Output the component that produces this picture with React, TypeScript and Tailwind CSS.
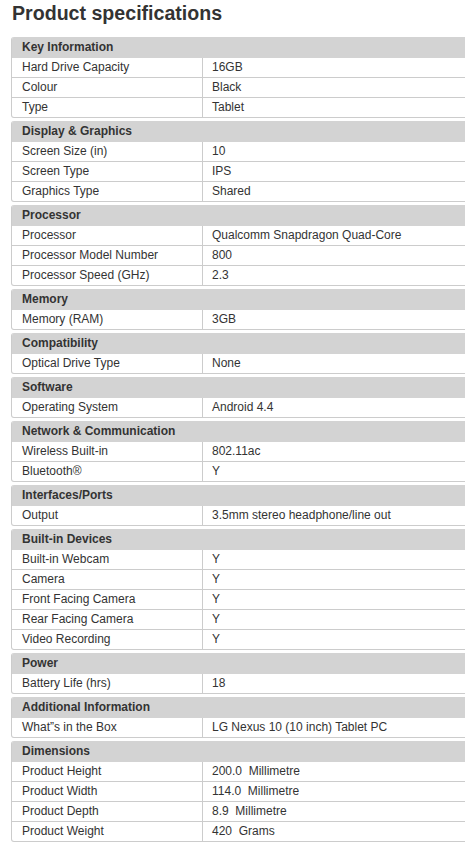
import React from "react";

type Section = { title: string; rows: [string, string][] };

const sections: Section[] = [
  {
    title: "Key Information",
    rows: [
      ["Hard Drive Capacity", "16GB"],
      ["Colour", "Black"],
      ["Type", "Tablet"],
    ],
  },
  {
    title: "Display & Graphics",
    rows: [
      ["Screen Size (in)", "10"],
      ["Screen Type", "IPS"],
      ["Graphics Type", "Shared"],
    ],
  },
  {
    title: "Processor",
    rows: [
      ["Processor", "Qualcomm Snapdragon Quad-Core"],
      ["Processor Model Number", "800"],
      ["Processor Speed (GHz)", "2.3"],
    ],
  },
  { title: "Memory", rows: [["Memory (RAM)", "3GB"]] },
  { title: "Compatibility", rows: [["Optical Drive Type", "None"]] },
  { title: "Software", rows: [["Operating System", "Android 4.4"]] },
  {
    title: "Network & Communication",
    rows: [
      ["Wireless Built-in", "802.11ac"],
      ["Bluetooth®", "Y"],
    ],
  },
  { title: "Interfaces/Ports", rows: [["Output", "3.5mm stereo headphone/line out"]] },
  {
    title: "Built-in Devices",
    rows: [
      ["Built-in Webcam", "Y"],
      ["Camera", "Y"],
      ["Front Facing Camera", "Y"],
      ["Rear Facing Camera", "Y"],
      ["Video Recording", "Y"],
    ],
  },
  { title: "Power", rows: [["Battery Life (hrs)", "18"]] },
  { title: "Additional Information", rows: [["What\u201ds in the Box", "LG Nexus 10 (10 inch) Tablet PC"]] },
  {
    title: "Dimensions",
    rows: [
      ["Product Height", "200.0  Millimetre"],
      ["Product Width", "114.0  Millimetre"],
      ["Product Depth", "8.9  Millimetre"],
      ["Product Weight", "420  Grams"],
    ],
  },
];

export default function App() {
  return (
    <div
      className="w-[465px] h-[843px] overflow-hidden bg-white text-[#333333] pt-[1px]"
      style={{ fontFamily: '"Liberation Sans", Arial, sans-serif' }}
    >
      <h1 className="pl-[12px] text-[19.6px] leading-[24px] font-bold text-[#333333] mb-[12px]">
        Product specifications
      </h1>
      <div className="ml-[11px] w-[460px] flex flex-col gap-[3px]">
        {sections.map((s) => (
          <div
            key={s.title}
            className="border-x border-b border-[#cccccc] rounded-[3px] overflow-hidden"
          >
            <div className="h-[20px] bg-[#d3d3d3] pl-[10px] text-[12px] leading-[20px] font-bold text-[#333333]">
              {s.title}
            </div>
            {s.rows.map(([k, v], i) => (
              <div
                key={k}
                className={
                  "flex h-[20px] text-[12px] leading-[19px] text-[#333333] " +
                  (i === 0 ? "border-t border-[#d3d3d3]" : "border-t border-[#cccccc]")
                }
              >
                <div className="w-[191px] shrink-0 border-r border-[#cccccc] pl-[10px] whitespace-pre">
                  {k}
                </div>
                <div className="pl-[9px] whitespace-pre">{v}</div>
              </div>
            ))}
          </div>
        ))}
      </div>
    </div>
  );
}
